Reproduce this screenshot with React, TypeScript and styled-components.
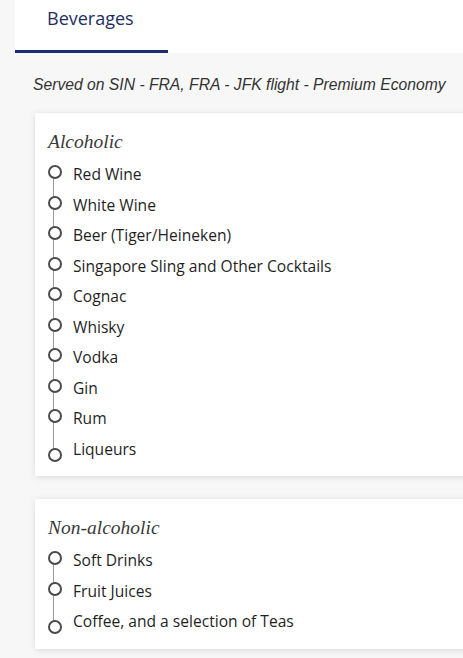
import styled, { createGlobalStyle } from 'styled-components';

const GlobalStyle = createGlobalStyle`
    html, body {
        margin: 0;
        padding: 0;
        background: #f7f7f7;
    }
    * {
        box-sizing: border-box;
    }
`;

type Section = {
    title: string;
    items: string[];
};

const sections: Section[] = [
    {
        title: 'Alcoholic',
        items: [
            'Red Wine',
            'White Wine',
            'Beer (Tiger/Heineken)',
            'Singapore Sling and Other Cocktails',
            'Cognac',
            'Whisky',
            'Vodka',
            'Gin',
            'Rum',
            'Liqueurs'
        ]
    },
    {
        title: 'Non-alcoholic',
        items: ['Soft Drinks', 'Fruit Juices', 'Coffee, and a selection of Teas']
    }
];

export default function App(){
    return(
        <Page>
            <GlobalStyle/>
            <TabBar>
                <Tab $active>Beverages</Tab>
            </TabBar>
            <Content>
                <Subtitle>Served on SIN - FRA, FRA - JFK flight - Premium Economy</Subtitle>
                {sections.map(section => (
                    <Card key={section.title}>
                        <CardTitle>{section.title}</CardTitle>
                        <List>
                            {section.items.map((item, i) => (
                                <Item key={item} $last={i === section.items.length - 1}>{item}</Item>
                            ))}
                        </List>
                    </Card>
                ))}
            </Content>
        </Page>
    );
};

const Item = styled.li<{ $last?: boolean }>`
    position: relative;
    height: 30.5px;
    line-height: 30.5px;
    padding-left: 25px;
    font-family: 'Open Sans', 'Liberation Sans', sans-serif;
    font-size: 15.6px;
    font-weight: 500;
    color: #1f1f1f;
    &::after{
        content: '';
        position: absolute;
        left: 0;
        top: ${p => p.$last ? '14px' : '6px'};
        width: 10px;
        height: 10px;
        border: 2px solid #4b4b4b;
        border-radius: 50%;
        background: #fff;
    }
`;

const List = styled.ul`
    position: relative;
    list-style: none;
    margin: 6px 0 0;
    padding: 0;
    &::before{
        content: '';
        position: absolute;
        left: 4.5px;
        top: 11px;
        bottom: 11px;
        width: 1.5px;
        background: #9b9b9b;
    }
`;

const CardTitle = styled.h2`
    margin: 0;
    height: 22px;
    line-height: 22px;
    font-family: 'Liberation Serif', serif;
    font-style: italic;
    font-weight: normal;
    font-size: 19.5px;
    color: #3a3a3a;
`;

const Card = styled.section`
    margin: 0 -30px 23px 0;
    padding: 18px 13px 12px;
    background: #fff;
    box-shadow: 0 1px 6px rgba(0, 0, 0, 0.12);
`;

const Subtitle = styled.p`
    margin: 0 0 18px -2px;
    height: 20px;
    line-height: 20px;
    font-family: 'Liberation Sans', Arial, sans-serif;
    font-style: italic;
    font-size: 15.7px;
    color: #333;
    white-space: nowrap;
`;

const Content = styled.div`
    padding: 22px 0 0 35px;
`;

const Tab = styled.div<{ $active?: boolean }>`
    width: 153px;
    height: 53px;
    padding: 6px 0 0 32px;
    font-family: 'Open Sans', 'Liberation Sans', sans-serif;
    font-size: 18px;
    color: #1f2e63;
    border-bottom: 3px solid ${p => p.$active ? '#1a2b72' : 'transparent'};
`;

const TabBar = styled.nav`
    display: flex;
    margin-left: 15px;
    height: 53px;
    background: #fff;
`;

const Page = styled.div`
    width: 100%;
    min-height: 658px;
    overflow: hidden;
`;
